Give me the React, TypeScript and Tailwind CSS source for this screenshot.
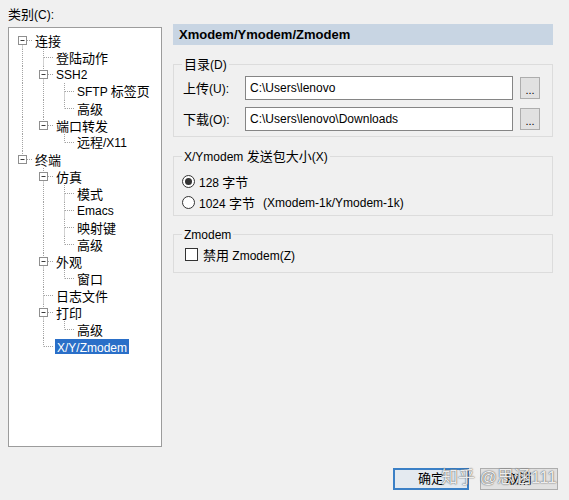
import React from "react";

const CJK = /([\u2E80-\u9FFF\uF900-\uFAFF\uFF00-\uFFEF]+)/;

function T({ s }: { s: string }) {
  const parts = s.split(CJK);
  return (
    <>
      {parts.map((p, i) =>
        p === "" ? null : CJK.test(p) ? (
          <span key={i} className="text-[13px]">
            {p}
          </span>
        ) : (
          <span key={i} className="text-[12px] whitespace-pre">
            {p}
          </span>
        )
      )}
    </>
  );
}

type Node = { t: string; c?: Node[]; sel?: boolean };
type Row = {
  t: string;
  level: number;
  guides: boolean[];
  last: boolean;
  first: boolean;
  kids: boolean;
  sel?: boolean;
};

const tree: Node[] = [
  {
    t: "连接",
    c: [
      { t: "登陆动作" },
      { t: "SSH2", c: [{ t: "SFTP 标签页" }, { t: "高级" }] },
      { t: "端口转发", c: [{ t: "远程/X11" }] },
    ],
  },
  {
    t: "终端",
    c: [
      { t: "仿真", c: [{ t: "模式" }, { t: "Emacs" }, { t: "映射键" }, { t: "高级" }] },
      { t: "外观", c: [{ t: "窗口" }] },
      { t: "日志文件" },
      { t: "打印", c: [{ t: "高级" }] },
      { t: "X/Y/Zmodem", sel: true },
    ],
  },
];

function flatten(nodes: Node[], level: number, guides: boolean[], out: Row[]) {
  nodes.forEach((n, i) => {
    const last = i === nodes.length - 1;
    out.push({
      t: n.t,
      level,
      guides,
      last,
      first: level === 0 && i === 0,
      kids: !!n.c,
      sel: n.sel,
    });
    if (n.c) flatten(n.c, level + 1, [...guides, !last], out);
  });
}

const rows: Row[] = [];
flatten(tree, 0, [], rows);

const LINE = "#a3a3a3";

function Guide({ on }: { on: boolean }) {
  return (
    <svg width="21" height="17" className="block shrink-0">
      {on && (
        <line x1="10.5" y1="0" x2="10.5" y2="17" stroke={LINE} strokeDasharray="1 1" />
      )}
    </svg>
  );
}

function Conn({ row }: { row: Row }) {
  return (
    <svg width="21" height="17" className="block shrink-0">
      {!row.first && (
        <line x1="10.5" y1="0" x2="10.5" y2="8.5" stroke={LINE} strokeDasharray="1 1" />
      )}
      {!row.last && (
        <line x1="10.5" y1="8.5" x2="10.5" y2="17" stroke={LINE} strokeDasharray="1 1" />
      )}
      <line
        x1={row.kids ? 15 : 11}
        y1="8.5"
        x2="21"
        y2="8.5"
        stroke={LINE}
        strokeDasharray="1 1"
      />
      {row.kids && (
        <>
          <rect x="6.5" y="4.5" width="8" height="8" fill="#ffffff" stroke="#8f8f8f" />
          <line x1="8.5" y1="8.5" x2="12.5" y2="8.5" stroke="#3c3c3c" />
        </>
      )}
    </svg>
  );
}

function Radio({ on }: { on?: boolean }) {
  return (
    <div className="w-[13px] h-[13px] rounded-full border border-[#333333] bg-white flex items-center justify-center shrink-0">
      {on && <div className="w-[7px] h-[7px] rounded-full bg-[#333333]" />}
    </div>
  );
}

export default function App() {
  return (
    <div className="relative w-[569px] h-[500px] overflow-hidden bg-[#f0f0f0] text-black font-['Liberation_Sans','Noto_Sans_CJK_SC',sans-serif]">
      <div className="flex pt-[6px]">
        {/* Left: category tree */}
        <div className="ml-[8px] w-[154px] shrink-0">
          <div className="h-[16px] leading-[16px] mb-[5px] whitespace-nowrap">
            <T s="类别(C):" />
          </div>
          <div className="h-[420px] border border-[#9c9c9c] bg-white pt-[4px] pl-[3px]">
            {rows.map((r, i) => (
              <div key={i} className="flex h-[17px] items-center">
                {r.guides.map((g, j) => (
                  <Guide key={j} on={g} />
                ))}
                <Conn row={r} />
                {r.sel ? (
                  <span className="ml-[1px] px-[2px] h-[15px] leading-[15px] bg-[#2a6fc8] text-white whitespace-nowrap">
                    <T s={r.t} />
                  </span>
                ) : (
                  <span className="ml-[2px] leading-[17px] whitespace-nowrap">
                    <T s={r.t} />
                  </span>
                )}
              </div>
            ))}
          </div>
        </div>

        {/* Right: settings */}
        <div className="ml-[11px] w-[380px] shrink-0 pt-[18px]">
          <div className="h-[21px] bg-[#c8d5e3] pl-[6px] flex items-center">
            <span className="text-[13px] font-bold">Xmodem/Ymodem/Zmodem</span>
          </div>

          <fieldset className="mt-[11px] border border-[#dcdcdc] pl-[8px] pr-[12px] pb-[5px] min-w-0">
            <legend className="px-[2px] h-[16px] leading-[16px]">
              <T s="目录(D)" />
            </legend>
            <div className="mt-[4px] flex items-center h-[24px]">
              <div className="w-[63px] shrink-0 whitespace-nowrap pl-[1px]">
                <T s="上传(U):" />
              </div>
              <div className="w-[268px] h-[24px] border border-[#858585] bg-white px-[4px] flex items-center shrink-0">
                <span className="text-[12px]">{"C:\\Users\\lenovo"}</span>
              </div>
              <div className="ml-[7px] w-[20px] h-[22px] border border-[#adadad] bg-[#e1e1e1] flex items-end justify-center shrink-0">
                <span className="text-[11px] leading-[15px]">...</span>
              </div>
            </div>
            <div className="mt-[7px] flex items-center h-[24px]">
              <div className="w-[63px] shrink-0 whitespace-nowrap pl-[1px]">
                <T s="下载(O):" />
              </div>
              <div className="w-[268px] h-[24px] border border-[#858585] bg-white px-[4px] flex items-center shrink-0">
                <span className="text-[12px]">{"C:\\Users\\lenovo\\Downloads"}</span>
              </div>
              <div className="ml-[7px] w-[20px] h-[22px] border border-[#adadad] bg-[#e1e1e1] flex items-end justify-center shrink-0">
                <span className="text-[11px] leading-[15px]">...</span>
              </div>
            </div>
          </fieldset>

          <fieldset className="mt-[11px] border border-[#dcdcdc] pl-[8px] pr-[12px] pb-[2px] min-w-0">
            <legend className="px-[2px] h-[16px] leading-[16px] whitespace-nowrap">
              <T s="X/Ymodem 发送包大小(X)" />
            </legend>
            <div className="mt-[7px] h-[21px] flex items-center gap-[4px]">
              <Radio on />
              <span className="whitespace-nowrap">
                <T s="128 字节" />
              </span>
            </div>
            <div className="h-[21px] flex items-center gap-[4px]">
              <Radio />
              <span className="whitespace-nowrap">
                <T s="1024 字节" />
              </span>
              <span className="ml-[4px] text-[12px] whitespace-nowrap">(Xmodem-1k/Ymodem-1k)</span>
            </div>
          </fieldset>

          <fieldset className="mt-[10px] border border-[#dcdcdc] pl-[8px] pr-[12px] pb-[7px] min-w-0">
            <legend className="px-[2px] h-[16px] leading-[16px]">
              <T s="Zmodem" />
            </legend>
            <div className="mt-[2px] h-[21px] flex items-center gap-[5px] pl-[3px]">
              <div className="w-[13px] h-[13px] border border-[#333333] bg-white shrink-0" />
              <span className="whitespace-nowrap">
                <T s="禁用 Zmodem(Z)" />
              </span>
            </div>
          </fieldset>
        </div>
      </div>

      {/* Bottom buttons */}
      <div className="mt-[21px] flex justify-end gap-[11px] pr-[11px]">
        <button className="w-[76px] h-[22px] border-2 border-[#3b80c6] bg-[#e4eaf0] flex items-center justify-center">
          <T s="确定" />
        </button>
        <button className="w-[78px] h-[22px] border border-[#adadad] bg-[#e1e1e1] flex items-center justify-center">
          <T s="取消" />
        </button>
      </div>

      {/* Watermark */}
      <div className="absolute left-[441px] top-[467px] text-[17px] leading-[22px] whitespace-nowrap text-white/90 [text-shadow:0_0_1px_rgba(0,0,0,0.7),0_0_2px_rgba(0,0,0,0.35)] pointer-events-none">
        知乎 @思涵111
      </div>
    </div>
  );
}
